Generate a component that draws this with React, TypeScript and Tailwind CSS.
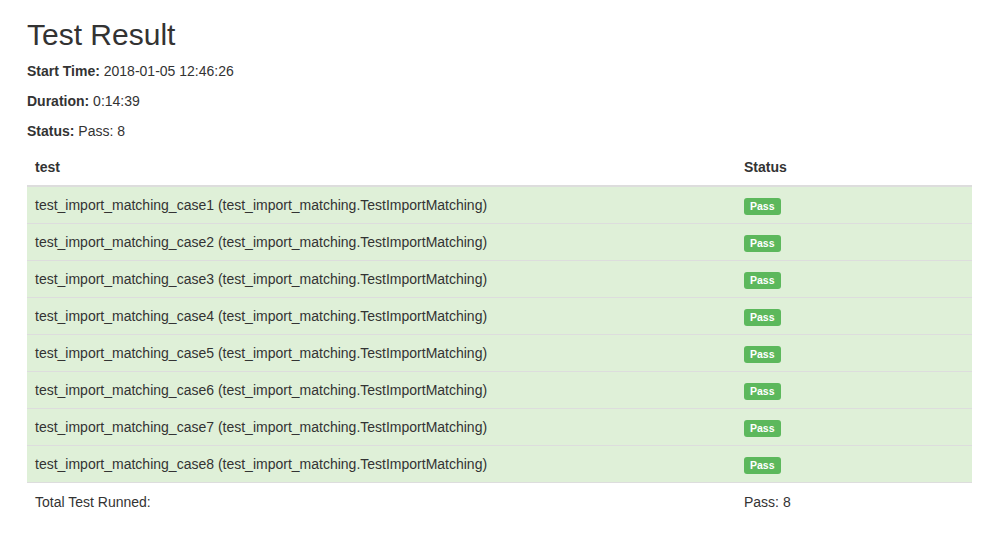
import React from 'react';

const rows = [1, 2, 3, 4, 5, 6, 7, 8];

export default function App() {
  return (
    <div className="min-h-screen bg-white text-[14px] text-[#333] px-[27px] pt-[17px]" style={{ fontFamily: '"Liberation Sans", Arial, sans-serif' }}>
      <h1 className="text-[30px] font-medium leading-[36px] mb-[8px]">Test Result</h1>
      <p className="leading-[20px] mb-[10px]"><strong>Start Time:</strong> 2018-01-05 12:46:26</p>
      <p className="leading-[20px] mb-[10px]"><strong>Duration:</strong> 0:14:39</p>
      <p className="leading-[20px] mb-[8px]"><strong>Status:</strong> Pass: 8</p>
      <table className="w-[945px] border-collapse">
        <thead>
          <tr className="border-b-2 border-[#ddd]">
            <th className="text-left font-bold px-2 py-2 leading-[20px] h-[36px]">test</th>
            <th className="text-left font-bold px-2 py-2 leading-[20px] w-[236px]">Status</th>
          </tr>
        </thead>
        <tbody>
          {rows.map((n) => (
            <tr key={n} className="bg-[#dff0d8] border-t border-[#ddd] h-[37px]">
              <td className="px-2 py-2 leading-[20px]">test_import_matching_case{n} (test_import_matching.TestImportMatching)</td>
              <td className="px-2 py-2 leading-[20px]">
                <span className="inline-block bg-[#5cb85c] text-white text-[10.5px] font-bold leading-none px-[6px] pt-[3px] pb-[4px] rounded-[3px] align-middle">Pass</span>
              </td>
            </tr>
          ))}
          <tr className="border-t border-[#ddd] h-[37px]">
            <td className="px-2 py-2 leading-[20px]">Total Test Runned:</td>
            <td className="px-2 py-2 leading-[20px]">Pass: 8</td>
          </tr>
        </tbody>
      </table>
    </div>
  );
}
